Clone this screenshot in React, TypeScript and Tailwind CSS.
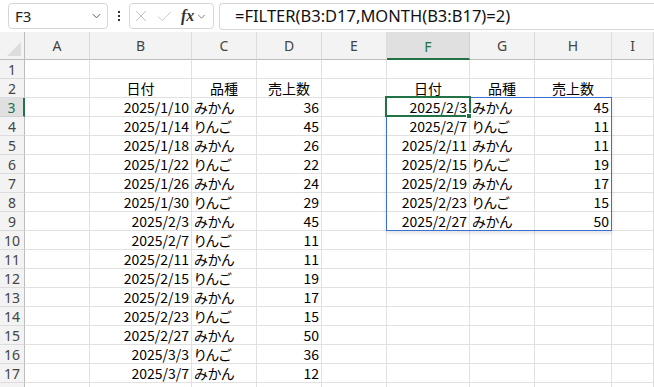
import React from "react";

type Row = [string, string, string];

const source: Row[] = [
  ["2025/1/10", "みかん", "36"],
  ["2025/1/14", "りんご", "45"],
  ["2025/1/18", "みかん", "26"],
  ["2025/1/22", "りんご", "22"],
  ["2025/1/26", "みかん", "24"],
  ["2025/1/30", "りんご", "29"],
  ["2025/2/3", "みかん", "45"],
  ["2025/2/7", "りんご", "11"],
  ["2025/2/11", "みかん", "11"],
  ["2025/2/15", "りんご", "19"],
  ["2025/2/19", "みかん", "17"],
  ["2025/2/23", "りんご", "15"],
  ["2025/2/27", "みかん", "50"],
  ["2025/3/3", "りんご", "36"],
  ["2025/3/7", "みかん", "12"],
];

const filtered = source.filter((r) => r[0].startsWith("2025/2/"));

const columns = ["A", "B", "C", "D", "E", "F", "G", "H", "I"];
const cellFont = "font-['Noto_Sans_CJK_JP',sans-serif] [font-feature-settings:'palt'] text-[14px] text-black";

type Cell = { text: string; align: "left" | "right" | "center" };

function cellsFor(row: number): (Cell | null)[] {
  const cells: (Cell | null)[] = Array(9).fill(null);
  if (row === 2) {
    cells[1] = { text: "日付", align: "center" };
    cells[2] = { text: "品種", align: "center" };
    cells[3] = { text: "売上数", align: "center" };
    cells[5] = { text: "日付", align: "center" };
    cells[6] = { text: "品種", align: "center" };
    cells[7] = { text: "売上数", align: "center" };
  }
  const src = source[row - 3];
  if (src) {
    cells[1] = { text: src[0], align: "right" };
    cells[2] = { text: src[1], align: "left" };
    cells[3] = { text: src[2], align: "right" };
  }
  const f = filtered[row - 3];
  if (f) {
    cells[5] = { text: f[0], align: "right" };
    cells[6] = { text: f[1], align: "left" };
    cells[7] = { text: f[2], align: "right" };
  }
  return cells;
}

function Chevron({ className }: { className?: string }) {
  return (
    <svg viewBox="0 0 10 6" className={className} fill="none" stroke="currentColor" strokeWidth="1.1">
      <path d="M1 1l4 4 4-4" />
    </svg>
  );
}

function FormulaBar() {
  return (
    <div className="flex h-8 items-center bg-white pl-2 font-['Noto_Sans',sans-serif]">
      <div className="flex h-[26px] w-[100px] items-center justify-between rounded-[4px] border border-[#d6d6d6] pl-[6px] pr-[6px]">
        <span className="text-[15px] text-[#222]">F3</span>
        <Chevron className="h-[6px] w-[9px] text-[#555]" />
      </div>
      <div className="flex w-[21px] flex-col items-center gap-[2px]">
        <span className="h-[2px] w-[2px] bg-[#333]" />
        <span className="h-[2px] w-[2px] bg-[#333]" />
        <span className="h-[2px] w-[2px] bg-[#333]" />
      </div>
      <div className="flex h-[26px] w-[85px] items-center rounded-[4px] border border-[#d6d6d6] pl-[5px]">
        <svg viewBox="0 0 12 12" className="h-[12px] w-[12px] text-[#c4c4c4]" fill="none" stroke="currentColor" strokeWidth="1">
          <path d="M1 1l10 10M11 1L1 11" />
        </svg>
        <svg viewBox="0 0 16 12" className="ml-[10px] h-[11px] w-[15px] text-[#c4c4c4]" fill="none" stroke="currentColor" strokeWidth="1">
          <path d="M1 6l4.5 4.5L15 1" />
        </svg>
        <span className="ml-[9px] font-['Liberation_Serif',serif] text-[16px] font-bold italic leading-none text-[#333]">fx</span>
        <Chevron className="ml-[3px] h-[5px] w-[9px] text-[#777]" />
      </div>
      <div className="ml-[5px] flex h-[27px] flex-1 items-center rounded-l-[4px] border border-r-0 border-[#d6d6d6] pl-[15px]">
        <span className="text-[16.5px] text-[#111]">=FILTER(B3:D17,MONTH(B3:B17)=2)</span>
      </div>
    </div>
  );
}

export default function App() {
  const rows = Array.from({ length: 18 }, (_, i) => i + 1);
  return (
    <div className="h-[387px] w-[654px] overflow-hidden bg-white">
      <FormulaBar />
      <div className="relative">
        <div className="grid grid-cols-[25px_65px_102px_65px_65px_65px_83px_65px_77px_1fr]">
          {/* column headers */}
          <div className="relative h-[28px] border-b border-r border-[#bdbdbd] bg-[#f3f3f3]">
            <svg viewBox="0 0 14 14" className="absolute bottom-[3px] right-[3px] h-[14px] w-[14px]">
              <path d="M14 0v14H0z" fill="#dcdcdc" />
            </svg>
          </div>
          {columns.map((c) =>
            c === "F" ? (
              <div
                key={c}
                className="flex h-[28px] items-center justify-center border-b-2 border-r border-b-[#217346] border-r-[#d0d0d0] bg-[#e0e0e0] pt-[2px] font-['Noto_Sans',sans-serif] text-[14px] text-[#217346]"
              >
                {c}
              </div>
            ) : (
              <div
                key={c}
                className="flex h-[28px] items-center justify-center border-b border-r border-b-[#bdbdbd] border-r-[#dcdcdc] bg-[#f3f3f3] font-['Noto_Sans',sans-serif] text-[14px] text-[#444]"
              >
                {c}
              </div>
            ),
          )}

          {rows.map((r) => (
            <React.Fragment key={r}>
              {r === 3 ? (
                <div className="flex h-[19px] items-center justify-center border-b border-r-2 border-b-[#d0d0d0] border-r-[#217346] bg-[#e0e0e0] font-['Noto_Sans',sans-serif] text-[14px] text-[#217346]">
                  {r}
                </div>
              ) : (
                <div className="flex h-[19px] items-center justify-center border-b border-r border-b-[#dcdcdc] border-r-[#bdbdbd] bg-[#f3f3f3] font-['Noto_Sans',sans-serif] text-[14px] text-[#444]">
                  {r < 18 ? r : ""}
                </div>
              )}
              {cellsFor(r).map((cell, ci) => (
                <div
                  key={ci}
                  className={`flex h-[19px] items-center overflow-visible whitespace-nowrap border-b border-r border-[#e1e1e1] px-[2px] ${cellFont} ${
                    cell?.align === "right" ? "justify-end" : cell?.align === "center" ? "justify-center" : "justify-start"
                  }`}
                >
                  {cell?.text}
                </div>
              ))}
            </React.Fragment>
          ))}
        </div>

        {/* spill range */}
        <div className="pointer-events-none absolute left-[386px] top-[65px] h-[134px] w-[226px] border border-[#3b6fd1] shadow-[0_2px_4px_rgba(0,0,0,0.12)]" />
        {/* active cell */}
        <div className="pointer-events-none absolute left-[385px] top-[64px] h-[21px] w-[86px] border-2 border-[#217346]" />
        <div className="pointer-events-none absolute left-[466px] top-[81px] h-[6px] w-[6px] border border-white bg-[#217346]" />
      </div>
    </div>
  );
}
